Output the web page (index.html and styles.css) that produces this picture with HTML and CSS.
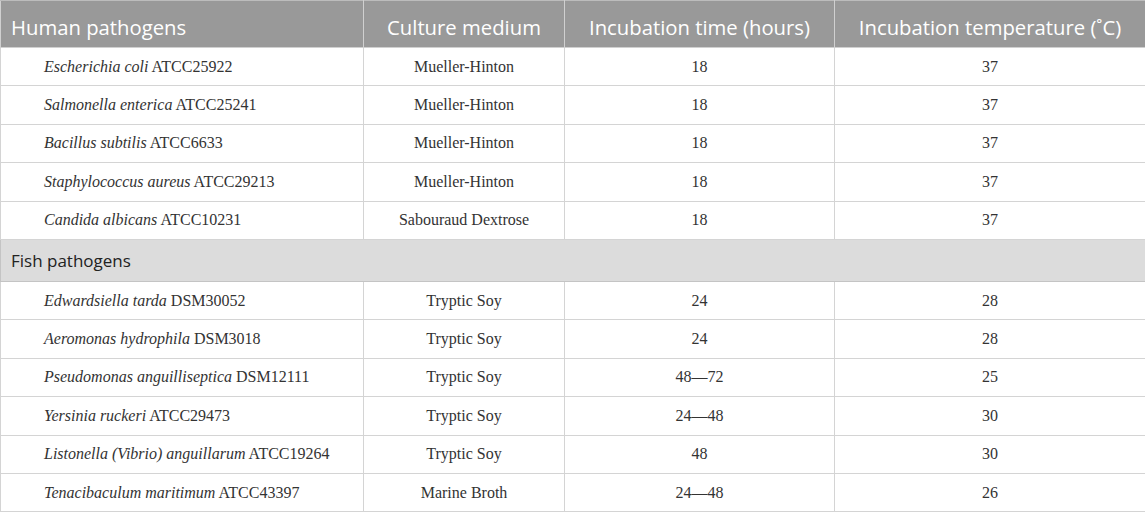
FILE: index.html
```html
<!DOCTYPE html>
<html>
<head>
<meta charset="utf-8">
<link rel="stylesheet" href="styles.css">
</head>
<body>
<table class="tbl">
  <colgroup>
    <col class="c1"><col class="c2"><col class="c3"><col class="c4">
  </colgroup>
  <thead>
    <tr class="head">
      <th class="left">Human pathogens</th>
      <th>Culture medium</th>
      <th>Incubation time (hours)</th>
      <th>Incubation temperature (˚C)</th>
    </tr>
  </thead>
  <tbody>
    <tr><td class="name"><i>Escherichia coli</i> ATCC25922</td><td>Mueller-Hinton</td><td>18</td><td>37</td></tr>
    <tr><td class="name"><i>Salmonella enterica</i> ATCC25241</td><td>Mueller-Hinton</td><td>18</td><td>37</td></tr>
    <tr><td class="name"><i>Bacillus subtilis</i> ATCC6633</td><td>Mueller-Hinton</td><td>18</td><td>37</td></tr>
    <tr><td class="name"><i>Staphylococcus aureus</i> ATCC29213</td><td>Mueller-Hinton</td><td>18</td><td>37</td></tr>
    <tr><td class="name"><i>Candida albicans</i> ATCC10231</td><td>Sabouraud Dextrose</td><td>18</td><td>37</td></tr>
    <tr class="group"><td colspan="4">Fish pathogens</td></tr>
    <tr><td class="name"><i>Edwardsiella tarda</i> DSM30052</td><td>Tryptic Soy</td><td>24</td><td>28</td></tr>
    <tr><td class="name"><i>Aeromonas hydrophila</i> DSM3018</td><td>Tryptic Soy</td><td>24</td><td>28</td></tr>
    <tr><td class="name"><i>Pseudomonas anguilliseptica</i> DSM12111</td><td>Tryptic Soy</td><td>48—72</td><td>25</td></tr>
    <tr><td class="name"><i>Yersinia ruckeri</i> ATCC29473</td><td>Tryptic Soy</td><td>24—48</td><td>30</td></tr>
    <tr><td class="name"><i>Listonella (Vibrio) anguillarum</i> ATCC19264</td><td>Tryptic Soy</td><td>48</td><td>30</td></tr>
    <tr><td class="name"><i>Tenacibaculum maritimum</i> ATCC43397</td><td>Marine Broth</td><td>24—48</td><td>26</td></tr>
  </tbody>
</table>
</body>
</html>
```
FILE: styles.css
```css
html, body {
  margin: 0;
  padding: 0;
  background: #fff;
}
.tbl {
  width: 1145px;
  border-collapse: collapse;
  table-layout: fixed;
  font-family: "Liberation Serif", "Times New Roman", serif;
  font-size: 16px;
  color: #333;
}
.c1 { width: 363px; }
.c2 { width: 201px; }
.c3 { width: 270px; }
.c4 { width: 311px; }
.head th {
  background: #999999;
  color: #fff;
  font-family: "Open Sans", "Noto Sans", sans-serif;
  font-weight: normal;
  font-size: 20.3px;
  height: 47px;
  padding: 5px 10px 0;
  box-sizing: border-box;
  text-align: center;
  border: 1px solid #d0d0d0;
  border-top: 1px solid #bcbcbc;
  white-space: nowrap;
}
.head th.left { text-align: left; }
td {
  border: 1px solid #d4d4d4;
  height: 37.4px;
  padding: 0 10px;
  text-align: center;
  white-space: nowrap;
}
td.name {
  text-align: left;
  padding-left: 43px;
}
.group td {
  background: #dcdcdc;
  text-align: left;
  font-family: "Open Sans", "Noto Sans", sans-serif;
  font-size: 17px;
  color: #222;
  height: 41px;
  padding-left: 10px;
  border-color: #c4c4c4;
}
```
